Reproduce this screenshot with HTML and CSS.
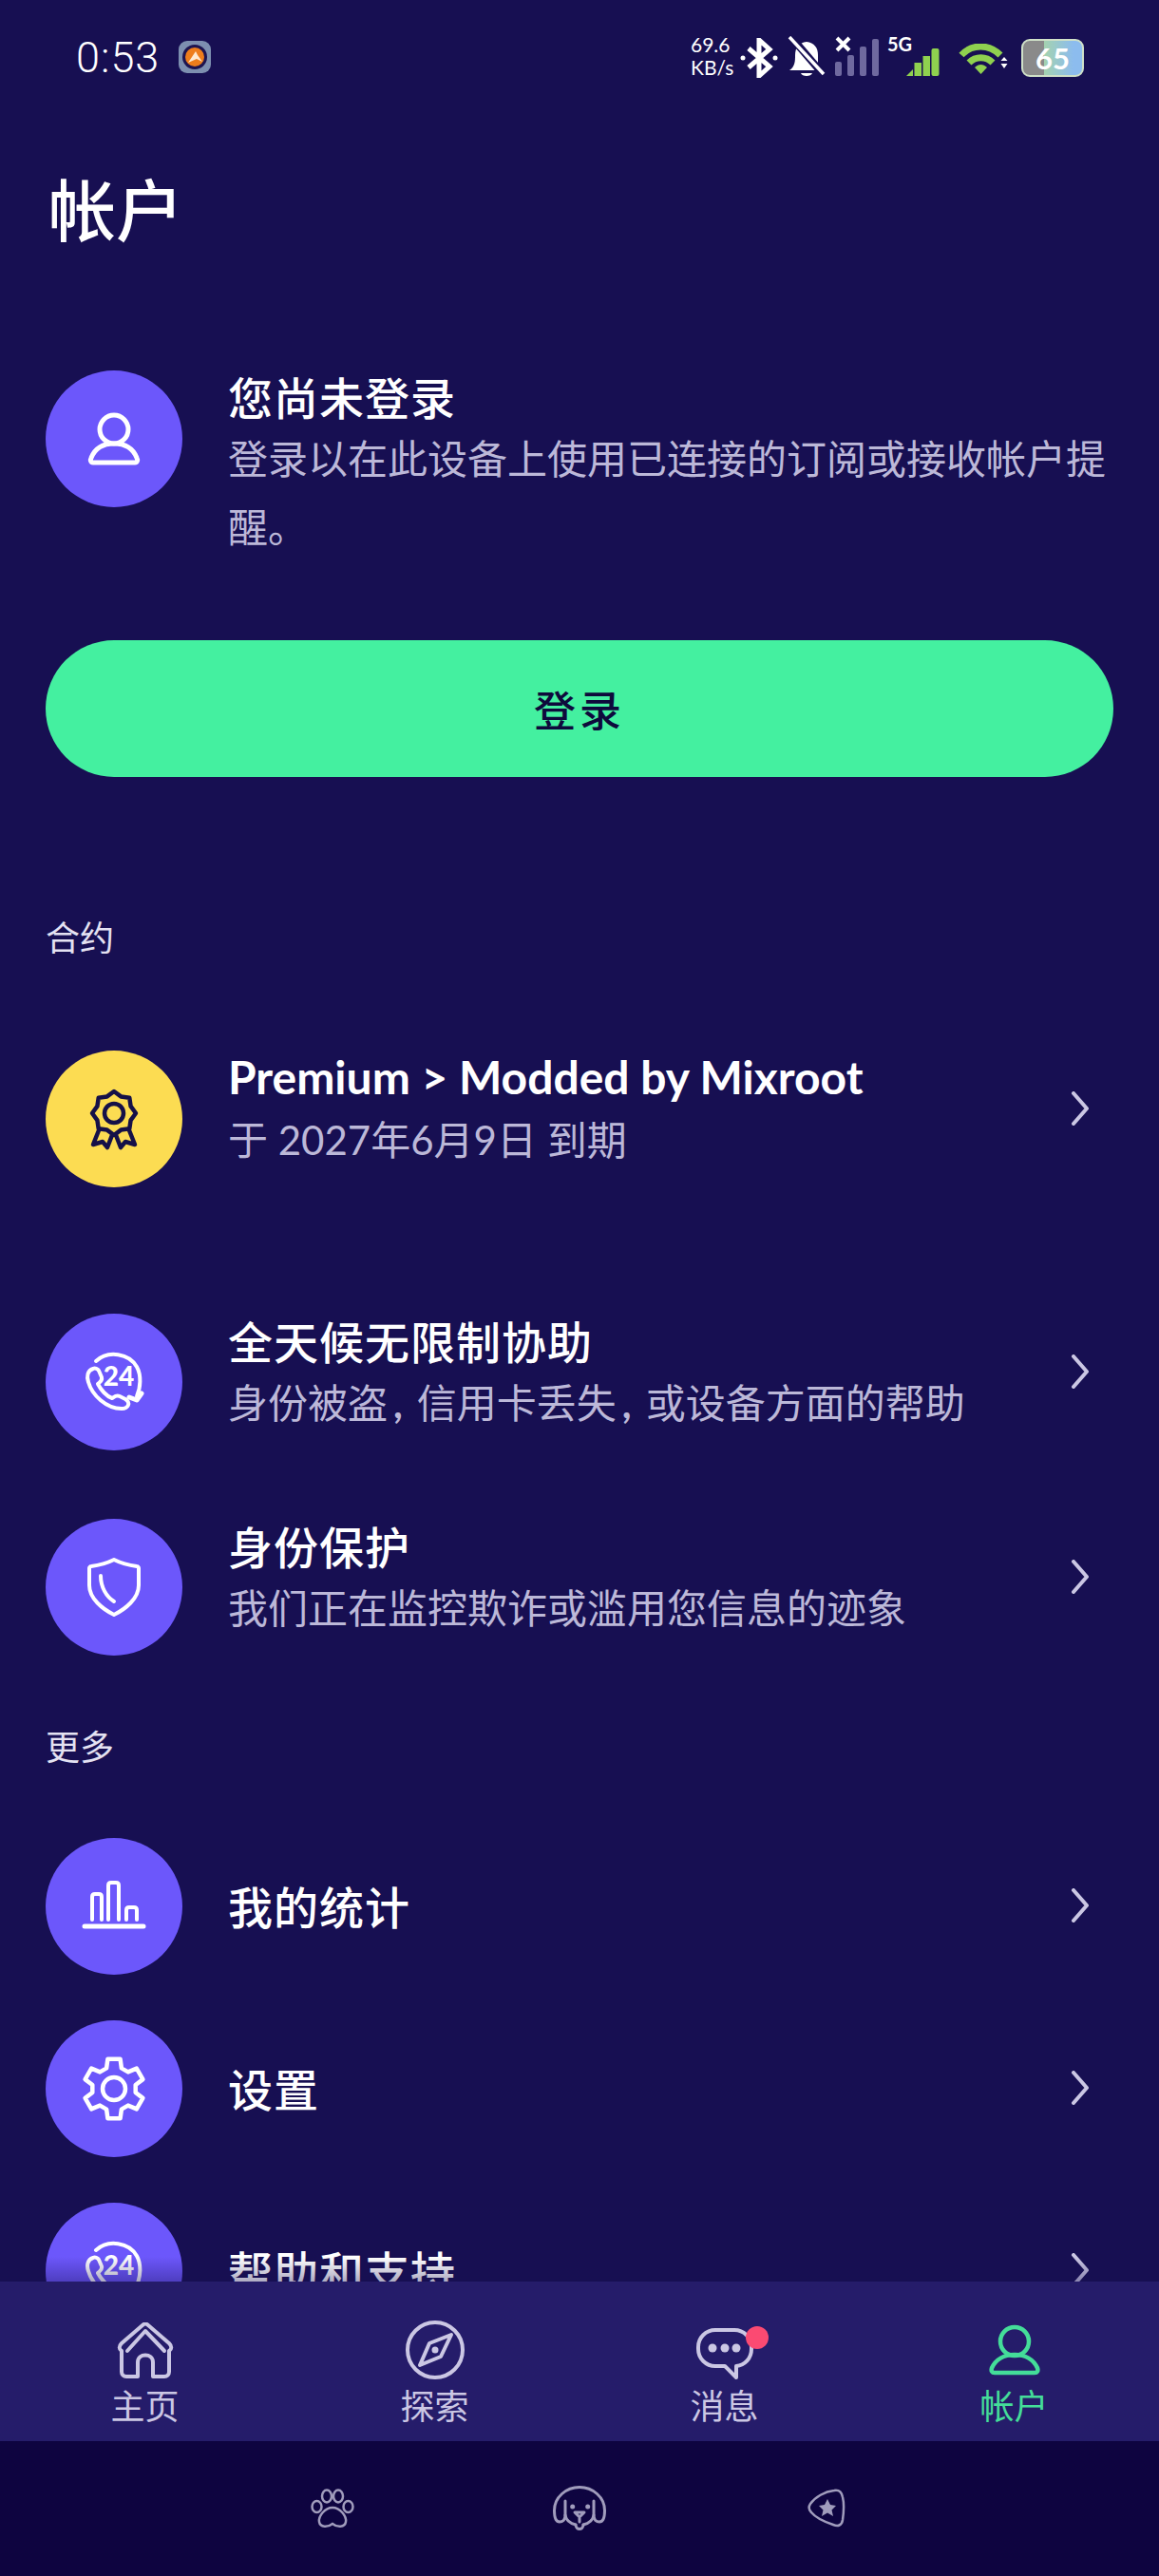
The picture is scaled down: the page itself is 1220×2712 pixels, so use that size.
FILE: index.html
```html
<!DOCTYPE html>
<html lang="zh-CN">
<head>
    <meta charset="utf-8">
    <title>帐户</title>
    <link rel="stylesheet" href="styles.css">
</head>
<body>
    <div class="phone">
        <!-- status bar -->
        <div class="status">
            <span class="time">0:53</span>
            <svg class="app-icon" width="34" height="34" viewBox="0 0 34 34">
                <rect width="34" height="34" rx="9" fill="#7d8fb0"/>
                <circle cx="17" cy="17" r="13" fill="#1d1450"/>
                <circle cx="17" cy="17" r="10" fill="#ee7d1c"/>
                <path d="M10 23 L18 11 L20 15 L25 22 L19 19 Z" fill="#ffe9d0"/>
            </svg>
            <div class="status-right">
                <div class="speed">69.6<br>KB/s</div>
                <svg class="st-bt" width="40" height="42" viewBox="0 0 40 42" fill="none" stroke="#fff" stroke-width="5">
                    <path d="M9 11 L31 30 L20 40 V2 L31 12 L9 31"/>
                    <circle cx="3" cy="21" r="2.5" fill="#fff" stroke="none"/>
                    <circle cx="37" cy="21" r="2.5" fill="#fff" stroke="none"/>
                </svg>
                <svg class="st-bell" width="40" height="44" viewBox="0 0 40 44">
                    <path d="M2 36 C8 32 8 26 8 20 C8 12 12 7 20 6 C28 7 32 12 32 20 V30 L37 36 Z" fill="#fff"/>
                    <path d="M14 39 H26 C25 43 15 43 14 39 Z" fill="#fff"/>
                    <path d="M3 0 L38 41" stroke="#170f52" stroke-width="8"/>
                    <path d="M2 1 L38 40" stroke="#fff" stroke-width="3.5"/>
                </svg>
                <svg class="st-signal" width="48" height="42" viewBox="0 0 48 42">
                    <path d="M2 2 L15 15 M15 2 L2 15" stroke="#fff" stroke-width="4"/>
                    <rect x="0" y="27" width="7" height="15" rx="2" fill="#6f699f"/>
                    <rect x="13" y="20" width="7" height="22" rx="2" fill="#6f699f"/>
                    <rect x="26" y="11" width="7" height="31" rx="2" fill="#6f699f"/>
                    <rect x="39" y="3" width="7" height="39" rx="2" fill="#6f699f"/>
                </svg>
                <div class="st-5g">
                    <span class="five-g">5G</span>
                    <svg class="st-signal-green" width="38" height="30" viewBox="0 0 38 30" fill="#8fd14f">
                        <path d="M0 30 L7 23 V30 Z"/>
                        <rect x="8.500" y="16" width="7.500" height="14"/>
                        <rect x="17.500" y="9" width="7.500" height="21"/>
                        <rect x="26.500" y="1" width="8" height="29" rx="2"/>
                    </svg>
                </div>
                <svg class="st-wifi" width="54" height="32" viewBox="0 0 54 32" fill="none" stroke="#8fd14f" stroke-width="7">
                    <path d="M3 12 C14 0 32 0 44 12"/>
                    <path d="M11 20 C18 13 29 13 36 20"/>
                    <path d="M17 25 L23.500 32 L30 25 C26 21 21 21 17 25 Z" fill="#8fd14f" stroke="none"/>
                    <path d="M48 14 L51.500 18 H44.500 Z M44.500 21 H51.500 L48 26 Z" fill="#fff" stroke="none"/>
                </svg>
                <div class="battery"><span class="battery-num">65</span></div>
            </div>
        </div>

        <!-- scrolling content -->
        <div class="content">
            <h1 class="page-title">帐户</h1>

            <div class="row row-login">
                <div class="circle">
                    <svg width="144" height="144" viewBox="0 0 144 144" fill="none" stroke="#fff" stroke-width="5">
                        <circle cx="72" cy="62" r="15"/>
                        <path d="M50 97 H94 C97 97 97 94 96 92 C92 82 84 77 72 77 C60 77 52 82 48 92 C47 94 47 97 50 97 Z"/>
                    </svg>
                </div>
                <div class="login-text">
                    <div class="title">您尚未登录</div>
                    <div class="sub sub-wrap">登录以在此设备上使用已连接的订阅或接收帐户提醒。</div>
                </div>
            </div>

            <button class="login-btn">登录</button>

            <div class="section section-contract">合约</div>

            <div class="row row-premium">
                <div class="circle circle-yellow">
                    <svg width="144" height="144" viewBox="0 0 144 144" fill="none" stroke="#151048" stroke-width="4.500" stroke-linejoin="round" stroke-linecap="round">
                        <path d="M72 43 L79.300 48.400 L88.300 49.700 L89.600 58.700 L95 66 L89.600 73.300 L88.300 82.300 L79.300 83.600 L72 89 L64.700 83.600 L55.700 82.300 L54.400 73.300 L49 66 L54.400 58.700 L55.700 49.700 L64.700 48.400 Z"/>
                        <circle cx="72" cy="66" r="10"/>
                        <path d="M56 84 L50 99 L60 96 L65 102 L70 89"/>
                        <path d="M88 84 L94 99 L84 96 L79 102 L74 89"/>
                    </svg>
                </div>
                <div class="row-body">
                    <div class="row-text">
                        <div class="title title-latin">Premium &gt; Modded by Mixroot</div>
                        <div class="sub">于 2027年6月9日 到期</div>
                    </div>
                    <svg class="chevron" width="20" height="36" viewBox="0 0 20 36"><path d="M3 2 L17 18 L3 34"/></svg>
                </div>
            </div>

            <div class="row row-help">
                <div class="circle">
                    <svg width="144" height="144" viewBox="0 0 144 144" fill="none" stroke="#fff" stroke-width="4" stroke-linecap="round" stroke-linejoin="round">
                        <path d="M50 58 C44 60 43 66 45 72 C49 86 64 100 80 100 C87 100 90 94 84 90 L78 87 C74 85 72 88 70 89 C64 87 58 80 55 74 C57 72 60 71 59 67 L56 60 C55 58 52 57 50 58 Z"/>
                        <path d="M53 50 C66 38 88 42 96 56 C101 65 100 78 96 87"/>
                        <path d="M88 88 L96 91 L101 84" stroke-width="5"/>
                        <text x="77" y="76" class="icon-24">24</text>
                    </svg>
                </div>
                <div class="row-body">
                    <div class="row-text">
                        <div class="title">全天候无限制协助</div>
                        <div class="sub">身份被盗<span class="comma">,</span>信用卡丢失<span class="comma">,</span>或设备方面的帮助</div>
                    </div>
                    <svg class="chevron" width="20" height="36" viewBox="0 0 20 36"><path d="M3 2 L17 18 L3 34"/></svg>
                </div>
            </div>

            <div class="row row-identity">
                <div class="circle">
                    <svg width="144" height="144" viewBox="0 0 144 144" fill="none" stroke="#fff" stroke-width="4" stroke-linecap="round" stroke-linejoin="round">
                        <path d="M72 43 C80 47 88 49 96 50 C97 50 98 51 98 52 V70 C98 84 84 95 72 101 C60 95 46 84 46 70 V52 C46 51 47 50 48 50 C56 49 64 47 72 43 Z"/>
                        <path d="M58 60 C58 72 64 82 72 87"/>
                    </svg>
                </div>
                <div class="row-body">
                    <div class="row-text">
                        <div class="title">身份保护</div>
                        <div class="sub">我们正在监控欺诈或滥用您信息的迹象</div>
                    </div>
                    <svg class="chevron" width="20" height="36" viewBox="0 0 20 36"><path d="M3 2 L17 18 L3 34"/></svg>
                </div>
            </div>

            <div class="section section-more">更多</div>

            <div class="row row-stats">
                <div class="circle">
                    <svg width="144" height="144" viewBox="0 0 144 144" fill="none" stroke="#fff" stroke-width="4" stroke-linecap="round" stroke-linejoin="round">
                        <path d="M41 93 H103" stroke-width="5"/>
                        <path d="M49 86 V62 Q49 59 52 59 H56 Q59 59 59 62 V86"/>
                        <path d="M66 86 V50 Q66 47 69 47 H74 Q77 47 77 50 V86"/>
                        <path d="M85 86 V76 Q85 73 88 73 H93 Q96 73 96 76 V86"/>
                    </svg>
                </div>
                <div class="row-body row-body-single">
                    <div class="title">我的统计</div>
                    <svg class="chevron" width="20" height="36" viewBox="0 0 20 36"><path d="M3 2 L17 18 L3 34"/></svg>
                </div>
            </div>

            <div class="row row-settings">
                <div class="circle">
                    <svg width="144" height="144" viewBox="0 0 144 144" fill="none" stroke="#fff" stroke-width="4.500" stroke-linejoin="round">
                        <path d="M64.100 50.400 L65.400 40.700 H78.600 L79.900 50.400 L86.800 54.400 L95.800 50.600 L102.400 62.100 L94.700 68 V76 L102.400 81.900 L95.800 93.400 L86.800 89.600 L79.900 93.600 L78.600 103.300 H65.400 L64.100 93.600 L57.200 89.600 L48.200 93.400 L41.600 81.900 L49.300 76 V68 L41.600 62.100 L48.200 50.600 L57.200 54.400 Z"/>
                        <circle cx="72" cy="72" r="12"/>
                    </svg>
                </div>
                <div class="row-body row-body-single">
                    <div class="title">设置</div>
                    <svg class="chevron" width="20" height="36" viewBox="0 0 20 36"><path d="M3 2 L17 18 L3 34"/></svg>
                </div>
            </div>

            <div class="row row-support">
                <div class="circle">
                    <svg width="144" height="144" viewBox="0 0 144 144" fill="none" stroke="#fff" stroke-width="4" stroke-linecap="round" stroke-linejoin="round">
                        <path d="M50 58 C44 60 43 66 45 72 C49 86 64 100 80 100 C87 100 90 94 84 90 L78 87 C74 85 72 88 70 89 C64 87 58 80 55 74 C57 72 60 71 59 67 L56 60 C55 58 52 57 50 58 Z"/>
                        <path d="M53 50 C66 38 88 42 96 56 C101 65 100 78 96 87"/>
                        <text x="77" y="76" class="icon-24">24</text>
                    </svg>
                </div>
                <div class="row-body row-body-single">
                    <div class="title">帮助和支持</div>
                    <svg class="chevron" width="20" height="36" viewBox="0 0 20 36"><path d="M3 2 L17 18 L3 34"/></svg>
                </div>
            </div>

            <div class="content-fade"></div>
        </div>

        <!-- tab bar -->
        <div class="tabbar">
            <div class="tab">
                <div class="tab-icon">
                    <svg width="60" height="60" viewBox="0 0 60 60" fill="none" stroke="currentColor" stroke-width="4" stroke-linecap="round" stroke-linejoin="round">
                        <path d="M5 30 C2 28 2 25 5 22 L27 3 C29 1 31 1 33 3 L55 22 C58 25 58 28 55 30 V52 C55 55 53 57 50 57 H38 V42 C38 32 22 32 22 42 V57 H10 C7 57 5 55 5 52 Z"/>
                        <path d="M11 30 L30 9 L50 30"/>
                    </svg>
                </div>
                <span>主页</span>
            </div>
            <div class="tab">
                <div class="tab-icon">
                    <svg width="62" height="62" viewBox="0 0 62 62" fill="none" stroke="currentColor" stroke-width="4" stroke-linejoin="round">
                        <circle cx="31" cy="31" r="29"/>
                        <path d="M48 15 L37 38 L15 47 L25 24 Z"/>
                        <circle cx="31" cy="31" r="3.500" fill="currentColor" stroke="none"/>
                    </svg>
                </div>
                <span>探索</span>
            </div>
            <div class="tab">
                <div class="tab-icon">
                    <svg width="60" height="54" viewBox="0 0 60 54" fill="none" stroke="currentColor" stroke-width="4" stroke-linecap="round" stroke-linejoin="round">
                        <path d="M20 2 H40 C50 2 58 10 58 20 V22 C58 32 51 39 42 40 V52 L30 40 H20 C10 40 2 32 2 22 V20 C2 10 10 2 20 2 Z"/>
                        <circle cx="17" cy="21" r="4.500" fill="currentColor" stroke="none"/>
                        <circle cx="30" cy="21" r="4.500" fill="currentColor" stroke="none"/>
                        <circle cx="42" cy="21" r="4.500" fill="currentColor" stroke="none"/>
                    </svg>
                    <span class="dot"></span>
                </div>
                <span>消息</span>
            </div>
            <div class="tab tab-active">
                <div class="tab-icon">
                    <svg width="54" height="54" viewBox="0 0 54 54" fill="none" stroke="currentColor" stroke-width="4.500">
                        <circle cx="27" cy="18" r="15"/>
                        <path d="M6 51 H48 C51 51 52 49 51 46 C47 37 38 32 27 32 C16 32 7 37 3 46 C2 49 3 51 6 51 Z"/>
                    </svg>
                </div>
                <span>帐户</span>
            </div>
        </div>

        <!-- system nav -->
        <div class="sysbar">
            <svg width="46" height="42" viewBox="0 0 46 42" fill="none" stroke="#a09cbc" stroke-width="2.500">
                <ellipse cx="6.500" cy="19" rx="5" ry="6"/>
                <ellipse cx="17" cy="8" rx="5" ry="6.500"/>
                <ellipse cx="29" cy="8" rx="5" ry="6.500"/>
                <ellipse cx="39.500" cy="19" rx="5" ry="6"/>
                <path d="M23 20 C15 20 8 29 9 35 C10 41 18 41 23 37 C28 41 36 41 37 35 C38 29 31 20 23 20 Z"/>
            </svg>
            <svg width="56" height="48" viewBox="0 0 56 48" fill="none" stroke="#a09cbc" stroke-width="3" stroke-linecap="round" stroke-linejoin="round">
                <path d="M13 16 V31 C13 36 10 38 7 38 C3 38 1.500 32 1.500 26 C1.500 12 14 1.500 28 1.500 C42 1.500 54.500 12 54.500 26 C54.500 32 53 38 49 38 C46 38 43 36 43 31 V16"/>
                <path d="M13 31 C14 37 20 40 24 41 M43 31 C42 37 36 40 32 41"/>
                <circle cx="20.700" cy="22" r="2.500" fill="#a09cbc" stroke="none"/>
                <circle cx="36.700" cy="22" r="2.500" fill="#a09cbc" stroke="none"/>
                <path d="M23 28 H33 L28 33 Z M28 33 V38"/>
                <path d="M24 41 C24 47 32 47 32 41"/>
            </svg>
            <svg width="40" height="42" viewBox="0 0 40 42" fill="none" stroke="#a09cbc" stroke-width="2.500" stroke-linejoin="round">
                <path d="M3 16 C8 9 18 3 28 2 C34 1 36 4 37 9 C39 17 38 26 37 33 C36 39 32 40 27 38 C18 35 9 31 4 25 C1 22 1 19 3 16 Z"/>
                <path d="M21 11 L24 17 L30 18 L25.500 22.500 L27 29 L21 25.500 L15 29 L16.500 22.500 L12 18 L18 17 Z" fill="#a09cbc" stroke="none"/>
            </svg>
        </div>
    </div>
</body>
</html>
```

FILE: styles.css
```css
* {
    box-sizing: border-box;
}

html,
body {
    margin: 0;
    padding: 0;
}

body {
    background-color: #170f52;
    font-family: "Lato", "Noto Sans CJK SC", sans-serif;
    color: #fff;
}

.phone {
    width: 1220px;
    height: 2712px;
    display: flex;
    flex-direction: column;
    overflow: hidden;
    background-color: #170f52;
}

/* status bar */
.status {
    height: 120px;
    flex-shrink: 0;
    display: flex;
    align-items: center;
    padding-left: 80px;
}

.time {
    font-family: "Roboto", sans-serif;
    font-size: 45px;
    font-weight: 300;
    letter-spacing: 1px;
}

.app-icon {
    margin-left: 20px;
}

.status-right {
    display: flex;
    align-items: flex-start;
    margin-left: auto;
    padding-right: 79px;
    height: 60px;
}

.speed {
    width: 52px;
    font-size: 21px;
    line-height: 24px;
    margin-top: 5px;
}

.st-bt {
    margin-top: 10px;
}

.st-bell {
    margin: 8px 0 0 10px;
}

.st-signal {
    margin: 8px 0 0 10px;
}

.st-5g {
    width: 82px;
    height: 60px;
    position: relative;
    margin-left: 7px;
}

.five-g {
    font-size: 20px;
    font-weight: 700;
    position: absolute;
    top: 4px;
    left: 0;
}

.st-signal-green {
    position: absolute;
    top: 20px;
    left: 20px;
}

.st-wifi {
    margin: 16px 0 0 -7px;
}

.battery {
    width: 66px;
    height: 40px;
    margin: 11px 0 0 12px;
    border: 2px solid #cfe0c8;
    border-radius: 9px;
    background: linear-gradient(90deg, #8a8a8a 0, #8a8a8a 36%, #a4d2b0 36%, #8cbcee 85%);
    text-align: center;
}

.battery-num {
    display: block;
    font-size: 31px;
    font-weight: 700;
    line-height: 36px;
}

/* content */
.content {
    flex: 1;
    position: relative;
    overflow: hidden;
    padding: 0 48px;
}

.content-fade {
    position: absolute;
    left: 0;
    right: 0;
    bottom: 0;
    height: 26px;
    background: linear-gradient(rgba(23, 15, 82, 0), rgba(23, 15, 82, 0.35));
}

.page-title {
    margin: 57px 0 0 3px;
    height: 80px;
    font-family: "Noto Sans CJK SC", sans-serif;
    font-size: 71px;
    font-weight: 500;
    line-height: 80px;
}

.row {
    display: flex;
    align-items: flex-start;
    gap: 48px;
}

.circle {
    width: 144px;
    height: 144px;
    flex-shrink: 0;
    border-radius: 50%;
    background-color: #6c57fb;
}

.circle-yellow {
    background-color: #fcdc52;
}

.row-login {
    margin-top: 133px;
}

.login-text {
    flex: 1;
    margin-top: -3px;
}

.row-body {
    flex: 1;
    height: 122px;
    display: flex;
    align-items: center;
    justify-content: space-between;
    padding-right: 25px;
}

.row-body-single {
    height: 142px;
}

.row-text {
    padding-top: 6px;
}

.title {
    font-family: "Noto Sans CJK SC", sans-serif;
    font-size: 47px;
    font-weight: 500;
    line-height: 60px;
    letter-spacing: 1px;
}

.title-latin {
    font-family: "Lato", "Noto Sans CJK SC", sans-serif;
    font-size: 48px;
    font-weight: 700;
    letter-spacing: 0;
}

.sub {
    font-family: "Lato", "Noto Sans CJK SC", sans-serif;
    font-size: 42px;
    line-height: 72px;
    color: #bcb8d8;
}

.sub-wrap {
    width: 940px;
}

.comma {
    padding: 0 15px 0 6px;
    font-weight: 700;
}

.login-btn {
    display: block;
    width: 100%;
    height: 144px;
    margin-top: 83px;
    border: none;
    border-radius: 72px;
    background-color: #44f0a0;
    color: #0e0a3c;
    font-family: "Noto Sans CJK SC", sans-serif;
    font-size: 44px;
    font-weight: 500;
    letter-spacing: 4px;
}

.section {
    font-family: "Noto Sans CJK SC", sans-serif;
    font-size: 36px;
    line-height: 48px;
    color: #e4e2f2;
}

.section-contract {
    margin-top: 143px;
}

.row-premium {
    margin-top: 97px;
}

.row-help {
    margin-top: 133px;
}

.row-identity {
    margin-top: 72px;
}

.section-more {
    margin-top: 70px;
}

.row-stats {
    margin-top: 74px;
}

.row-settings,
.row-support {
    margin-top: 48px;
}

.chevron {
    flex-shrink: 0;
    fill: none;
    stroke: #cbc7e4;
    stroke-width: 4;
    stroke-linecap: round;
    stroke-linejoin: round;
}

.icon-24 {
    font-family: "Lato", sans-serif;
    font-size: 28px;
    font-weight: 900;
    fill: #fff;
    stroke: none;
    text-anchor: middle;
}

/* tab bar */
.tabbar {
    height: 168px;
    flex-shrink: 0;
    display: grid;
    grid-template-columns: repeat(4, 1fr);
    background-color: #251c6a;
}

.tab {
    display: flex;
    flex-direction: column;
    align-items: center;
    font-family: "Noto Sans CJK SC", sans-serif;
    font-size: 36px;
    line-height: 44px;
    color: #cbc7e4;
}

.tab-active {
    color: #44dd99;
}

.tab-active svg {
    margin-bottom: 4px;
}

.tab-icon {
    position: relative;
    height: 62px;
    margin-top: 41px;
    margin-bottom: 4px;
    display: flex;
    align-items: flex-end;
}

.dot {
    position: absolute;
    top: 6px;
    right: -16px;
    width: 24px;
    height: 24px;
    border-radius: 50%;
    background-color: #fb4a72;
}

/* system nav */
.sysbar {
    flex: 0 0 142px;
    display: grid;
    grid-template-columns: repeat(3, 260px);
    justify-content: center;
    justify-items: center;
    align-items: center;
    background-color: #0e0440;
}
```
